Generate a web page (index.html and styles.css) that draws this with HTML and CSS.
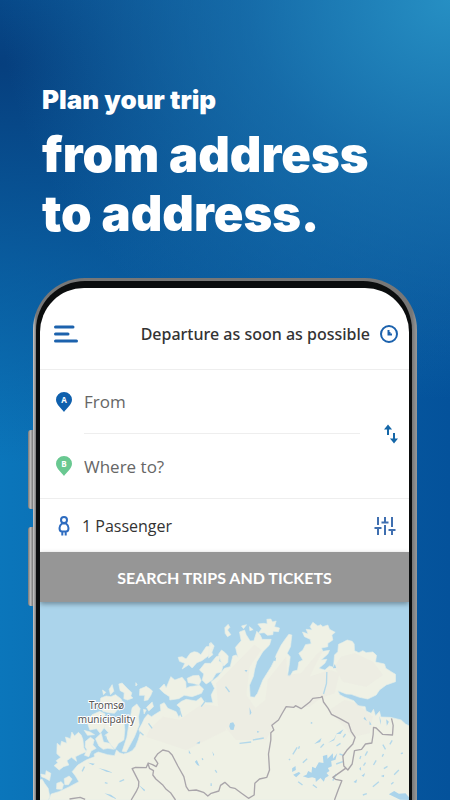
FILE: index.html
```
<!DOCTYPE html>
<html lang="en">
	<head>
		<meta charset="utf-8" />
		<meta name="viewport" content="width=device-width, initial-scale=1" />
		<title>Plan your trip</title>
		<link rel="stylesheet" href="styles.css">
	</head>
	<body>
		<h1 class="headline">
			<span class="headline-small">Plan your trip</span>
			from address<br>to address.
		</h1>
		<div class="phone">
			<div class="side-key key-up"></div>
			<div class="side-key key-down"></div>
			<div class="bezel">
				<div class="screen">
					<div class="topbar">
						<button class="iconbtn" type="button" aria-label="Menu">
							<svg class="menu-icon" width="24" height="18" viewBox="0 0 24 18">
								<path d="M1.5 2H19M1.5 9H14M1.5 16H22.500" />
							</svg>
						</button>
						<button class="departure" type="button">
							Departure as soon as possible
							<svg width="20" height="20" viewBox="0 0 20 20">
								<circle cx="10" cy="10" r="8" />
								<path d="M9.500 6V10.500H13M10.500 8V10" />
							</svg>
						</button>
					</div>
					<form class="search">
						<div class="route">
							<div class="fields">
								<div class="field">
									<label for="from">
										<svg class="pin" width="16" height="20" viewBox="0 0 16 20">
											<path d="M8 20C6 17 0 12.500 0 7.800A8 7.800 0 0 1 16 7.800C16 12.500 10 17 8 20Z" />
											<text x="8" y="11">A</text>
										</svg>
									</label>
									<input id="from" type="text" placeholder="From" aria-label="From">
								</div>
								<div class="field">
									<label for="to">
										<svg class="pin pin-b" width="16" height="20" viewBox="0 0 16 20">
											<path d="M8 20C6 17 0 12.500 0 7.800A8 7.800 0 0 1 16 7.800C16 12.500 10 17 8 20Z" />
											<text x="8" y="11">B</text>
										</svg>
									</label>
									<input id="to" type="text" placeholder="Where to?" aria-label="Where to?">
								</div>
							</div>
							<button class="iconbtn" type="button" aria-label="Swap">
								<svg class="swap-icon" width="14" height="20" viewBox="0 0 14 20">
									<path d="M4 11V3M2 4.500L4 2L6 4.500Z" />
									<path d="M10 9V17M8 15.500L10 18L12 15.500Z" />
								</svg>
							</button>
						</div>
						<div class="options">
							<button class="passenger" type="button">
								<svg width="12" height="20" viewBox="0 0 12 20">
									<circle cx="6" cy="4" r="3" />
									<path d="M4 7.500C2 9 1.500 10.500 1.500 12C1.500 14 2.500 15.500 4 15.500H8C9.500 15.500 10.500 14 10.500 12C10.500 10.500 10 9 8 7.500ZM4.300 16V19.500M7.700 16V19.500" />
								</svg>
								1 Passenger
							</button>
							<button class="iconbtn" type="button" aria-label="Filters">
								<svg class="filter-icon" width="22" height="20" viewBox="0 0 22 20">
									<path d="M4 1V9M4 12V19M0.500 12H7.500M11 1V6M11 9V19M7.500 6.500H14.500M18 1V11M18 14V19M14.500 14H21.500" />
								</svg>
							</button>
						</div>
						<button class="submit" type="submit">SEARCH TRIPS AND TICKETS</button>
					</form>
					<div class="map">
						<svg viewBox="60 6 1110 594" preserveAspectRatio="xMidYMin slice">
							<!-- mainland -->
							<path class="land" d="M88 600L95 582L118 575L150 560L178 545L168 528L158 515L175 495L200 480L215 474L225 470L224 462L236 456L250 460L264 464L285 467L291 450L300 458L312 462L326 458L338 452L348 440L356 420L362 400L358 388L368 370L375 355L385 343L396 350L408 342L424 332L422 314L434 308L445 325L470 335L478 352L485 340L482 324L472 315L486 304L500 298L530 303L545 292L553 304L562 308L580 308L575 285L585 265L575 245L595 230L615 205L632 200L640 168L650 165L655 172L648 142L665 122L660 96L675 90L680 104L692 123L703 122L712 94L722 105L728 118L755 118L750 135L730 155L712 185L705 210L702 228L690 256L692 290L705 292L714 280L722 260L730 240L755 200L766 178L770 165L785 135L798 116L808 103L817 105L813 140L803 160L812 170L810 190L804 228L812 229L820 214L834 210L838 186L850 180L838 160L850 150L858 134L875 131L872 118L855 110L849 96L866 102L860 88L878 90L872 80L880 67L895 78L904 74L910 80L925 75L930 88L947 97L937 105L940 120L925 130L925 140L906 144L910 154L930 151L925 162L905 180L922 178L916 190L898 205L916 210L930 198L942 202L945 165L955 155L957 133L970 127L983 120L998 124L1004 132L1005 152L1018 158L1030 152L1040 158L1060 156L1071 166L1068 186L1095 192L1099 205L1115 215L1128 223L1128 245L1100 255L1080 270L1070 285L1045 297L1020 292L995 283L980 282L955 272L961 284L974 291L1003 302L1015 317L1037 320L1040 333L1055 340L1062 328L1068 348L1080 334L1084 351L1112 352L1130 356L1145 360L1158 372L1170 378V600Z" />
							<!-- islands -->
							<path class="land" d="M476 172L488 170L500 177L512 160L524 155L534 157L544 164L560 140L572 139L574 127L584 138L576 160L561 172L547 182L532 188L518 204L508 194L488 207L496 190L480 184ZM540 210L556 190L574 190L590 170L602 166L598 184L612 190L606 216L590 220L578 240L560 252L548 240L553 222ZM503 235L520 227L538 226L545 242L538 255L520 250L506 248ZM420 266L434 252L440 264L454 230L466 240L488 232L499 246L500 265L510 260L540 256L552 267L546 280L518 290L494 286L478 296L451 300L450 290L432 278ZM361 267L374 262L380 259L392 267L399 273L394 286L385 300L374 302L376 286L360 286ZM298 252L308 249L322 264L337 278L334 288L340 294L324 300L313 296L314 278L302 272ZM244 294L260 288L274 290L288 284L304 296L312 310L298 325L285 340L268 338L250 334L240 318ZM269 268L278 254L283 274L273 284ZM249 270L259 277L252 284ZM202 364L218 344L241 334L257 342L252 358L260 366L256 380L242 400L231 386L211 390ZM194 391L212 396L225 404L204 406ZM338 323L352 312L362 326L357 350L359 375L345 410L331 436L320 456L308 454L322 412L327 380ZM261 360L278 348L297 360L313 358L316 390L313 420L297 430L286 448L274 434L256 406L267 398L254 384ZM228 416L245 400L252 426L270 430L283 448L265 445L251 448L238 438ZM113 430L123 438L126 424L142 430L138 411L153 416L157 396L165 408L177 397L185 405L190 418L193 444L201 455L184 462L168 470L171 484L156 472L142 482L148 495L132 500L119 510L104 497L115 488L110 482L124 472L112 461ZM198 424L213 412L224 420L220 435L230 445L215 453L208 470L195 466L202 449L197 440ZM60 540L68 538L75 550L86 565L91 590L86 600H60ZM64 522L78 525L80 512L94 520L90 542L76 534L66 530ZM112 550L125 545L132 553L128 568L111 567ZM134 536L149 528L158 537L147 554L136 554ZM597 163L606 150L617 158L626 168L625 187L613 198L604 184ZM616 83L626 73L631 82L624 90L634 104L624 110L617 100ZM715 72L733 70L743 72L742 58L754 57L759 66L770 63L765 80L780 84L777 95L761 94L760 104L744 106L734 98L717 100L726 86ZM570 130L582 137L574 152L580 164L567 174ZM666 78L681 74L672 86ZM349 248L353 254L349 258ZM690 80L701 89L691 92ZM381 322L398 306L402 320L388 333ZM372 328L380 330L374 342Z" />
							<!-- high ground -->
							<path class="hill" d="M590 250L650 190L705 135L725 150L690 200L680 285L708 325L738 300L745 240L800 170L803 225L845 220L895 160L910 150L870 230L930 210L960 220L945 280L905 293L870 320L795 325L755 390L740 420L650 420L600 360ZM390 390L430 350L480 360L548 312L600 320L620 390L500 450L440 430L380 410ZM965 170L1005 160L1060 185L1090 225L1040 260L970 245L945 200ZM975 300L1010 310L1060 350L1050 400L1000 410L930 330Z" />
							<!-- fjords, lakes and rivers -->
							<path class="water" d="M632 369L641 367L646 376L642 390L633 389L629 379ZM850 529L861 524L866 513L876 518L878 500L888 505L898 487L912 489L910 468L923 464L924 476L940 460L941 476L953 460L948 479L935 483L937 499L925 504L930 513L921 519L928 527L917 534L913 545L903 534L889 546L888 535L878 532L866 534ZM821 524L838 516L843 520L830 532ZM926 428L944 416L952 400L944 421ZM950 402L972 388L963 402ZM884 432L906 414L902 426ZM526 485L532 480L540 498L533 495ZM530 430L542 424L540 431ZM358 555L377 570L374 574ZM255 580L274 584L292 597L277 592ZM237 504L260 510L280 518L261 515ZM206 488L226 491L220 496ZM690 322L696 338L691 346ZM1108 583L1124 573L1138 581L1158 580L1170 593V600L1142 599ZM818 505L828 498L829 510L818 516ZM1084 528L1094 524L1093 532ZM874 365L880 369L874 372ZM712 392L720 395L714 399ZM940 205L946 192L950 204ZM1050 363L1056 374L1050 374ZM1080 348L1084 363L1082 374ZM1100 358L1108 365L1102 377ZM1036 350L1042 363L1032 356ZM760 180L770 171L768 184ZM675 210L684 210L680 217ZM1019 507L1024 500L1025 512ZM1002 546L1013 538L1010 549ZM1026 527L1037 519L1033 530ZM578 454L584 464L582 468ZM508 450L514 461L508 460Z" />
							<path class="stream" d="M360 395L372 406M258 407L263 425M387 370L398 385M560 300L545 320M487 350L478 328M630 276L618 260M660 430L695 426M700 420L733 414M922 216L921 250L912 282M833 442L820 463M808 480L812 477M840 439L837 446M1062 495L1070 481M1090 434L1098 448M1111 433L1118 421M1060 560L1078 545M1124 524L1138 510M1088 470L1092 462M1144 461L1150 459M1021 477L1024 468M971 412L978 402M963 430L951 438M903 443L913 432M960 462L972 466M950 492L970 485M850 488L863 476M836 545L849 555M880 554L892 563M950 522L940 542M1093 506L1104 499M1032 497L1038 488M1115 553L1122 547M1030 585L1042 581M1044 454L1037 467M575 550V558M587 510L592 518M548 475L550 480M195 500L188 514M214 464L218 456M256 548L264 550M300 545L314 539" />
							<path class="border" d="M335 600L350 575L357 560L358 545L338 506L348 502L380 503L386 489L399 494L410 500L415 490L405 475L415 461L430 450L447 454L458 465L475 498L493 530L500 560L508 572L530 570L552 577L565 588L575 580L598 573L603 556L616 547L632 562L646 565L664 578L687 595L704 585L706 550L720 537L742 532L750 510L747 462L754 420L754 398L763 390L757 376L777 360L787 342L800 320L823 322L828 317L845 326L870 307L880 295L904 292L908 289L912 306L926 325L936 343L960 355L987 370L995 394L1007 412L1000 432L982 451L970 468L973 498L985 510L998 492L1005 452L1026 448L1038 432L1057 429L1061 403L1062 382L1070 384L1089 403L1119 405L1121 376L1116 355M978 505L940 532L948 538L967 542L956 570L945 600M385 490L390 505L402 512L400 525L409 537L429 554L440 568L453 578L468 600M150 597L182 592L197 598" />
							<text x="261" y="327">Tromsø</text>
							<text x="261" y="368">municipality</text>
						</svg>
					</div>
				</div>
			</div>
		</div>
	</body>
</html>
```
FILE: styles.css
```
*{
	box-sizing: border-box;
	margin: 0;
	padding: 0;
}
body{
	display: flex;
	flex-direction: column;
	height: 100vh;
	overflow: hidden;
	font-family: "Open Sans", "Noto Sans", sans-serif;
	background:
		radial-gradient(ellipse 100% 50% at 100% 0, #268fc3, rgba(29,122,181,0.65) 45%, rgba(20,105,165,0) 100%),
		radial-gradient(ellipse 150% 50% at 0 8%, #063f7e, rgba(8,75,140,0.6) 50%, rgba(10,90,155,0) 100%),
		linear-gradient(90deg, #0b76bb, #0a62a6 50%, #04529b);
}
button{
	border: 0;
	background: none;
	font: inherit;
	color: inherit;
	cursor: pointer;
}
svg{
	display: block;
	fill: none;
	stroke: #1c62ad;
	stroke-width: 2;
}
.headline{
	padding: 84px 42px 0;
	height: 278px;
	font-family: Inter, sans-serif;
	font-size: 49px;
	font-weight: 900;
	line-height: 59px;
	white-space: nowrap;
	color: #fff;
}
.headline-small{
	display: block;
	margin-bottom: 9px;
	font-size: 26px;
	line-height: 32px;
}
.phone{
	flex: 1;
	display: flex;
	position: relative;
	min-height: 0;
	margin: 0 33px;
	padding: 3px 5px 0 3px;
	border-radius: 52px 52px 0 0;
	background: linear-gradient(90deg, #ccc, #777 3px, #777 50%, #777 calc(100% - 5px), #999);
}
.side-key{
	position: absolute;
	left: -5px;
	width: 5px;
	height: 79px;
	border-radius: 3px 0 0 3px;
	background: linear-gradient(90deg, #777, #bbb, #777);
}
.key-up{
	top: 152px;
}
.key-down{
	top: 249px;
}
.bezel{
	flex: 1;
	display: flex;
	min-width: 0;
	padding: 7px 3px 0 4px;
	border-radius: 49px 49px 0 0;
	background: #0b0d0e;
}
.screen{
	flex: 1;
	display: flex;
	flex-direction: column;
	min-width: 0;
	overflow: hidden;
	border-radius: 44px 44px 0 0;
	background: #fff;
	font-size: 16px;
	color: #333;
}
.topbar{
	display: flex;
	justify-content: space-between;
	align-items: center;
	height: 82px;
	padding: 10px 10px 0 14px;
	border-bottom: 1px solid #eee;
}
.menu-icon{
	stroke-width: 3;
	stroke-linecap: round;
}
.departure{
	display: flex;
	align-items: center;
	gap: 9px;
	white-space: nowrap;
	font-family: "Noto Sans", sans-serif;
	font-weight: 500;
}
.route{
	display: flex;
	align-items: center;
	height: 129px;
	padding-right: 11px;
	border-bottom: 1px solid #eee;
}
.fields{
	flex: 1;
	margin-right: 24px;
}
.field{
	display: flex;
	align-items: center;
	height: 64px;
	padding-left: 16px;
	gap: 12px;
}
.field input{
	flex: 1;
	align-self: stretch;
	min-width: 0;
	border: 0;
	outline: 0;
	background: none;
	font: inherit;
	font-size: 17px;
	color: #333;
}
.field:first-child input{
	border-bottom: 1px solid #eee;
}
.field input::placeholder{
	color: #666;
}
.pin{
	fill: #0f60ad;
	stroke: none;
}
.pin-b{
	fill: #69c891;
}
.pin text{
	fill: #fff;
	font-size: 8px;
	font-weight: 700;
	text-anchor: middle;
}
.swap-icon{
	stroke: #1567a8;
	fill: #1567a8;
}
.options{
	display: flex;
	justify-content: space-between;
	align-items: center;
	height: 53px;
	padding: 0 13px 0 18px;
}
.passenger{
	display: flex;
	align-items: center;
	gap: 12px;
}
.passenger svg{
	stroke: #2e6cc0;
}
.filter-icon{
	stroke: #3f6fb0;
}
.submit{
	display: block;
	position: relative;
	width: 100%;
	height: 50px;
	background: #969696;
	box-shadow: 0 2px 5px rgba(0,0,0,0.35);
	font-family: Lato, sans-serif;
	font-size: 16px;
	font-weight: 700;
	color: #fff;
}
.map{
	flex: 1;
	min-height: 0;
	background: #abd4eb;
}
.map svg{
	width: 100%;
	height: 100%;
	stroke: none;
}
.map .land{
	fill: #eff1e5;
	stroke: #e6eee9;
	stroke-width: 2;
	stroke-linejoin: round;
}
.map .hill{
	fill: #ece9e1;
	opacity: 0.5;
}
.map .water{
	fill: #abd4eb;
}
.map .stream{
	stroke: #b3d8ea;
	stroke-width: 4;
}
.map .border{
	stroke: #a9a5aa;
	stroke-width: 4;
	stroke-linejoin: round;
}
.map text{
	fill: #555;
	stroke: #fff;
	stroke-width: 6;
	paint-order: stroke;
	font-family: "Noto Sans", sans-serif;
	font-size: 30px;
	text-anchor: middle;
}
```
